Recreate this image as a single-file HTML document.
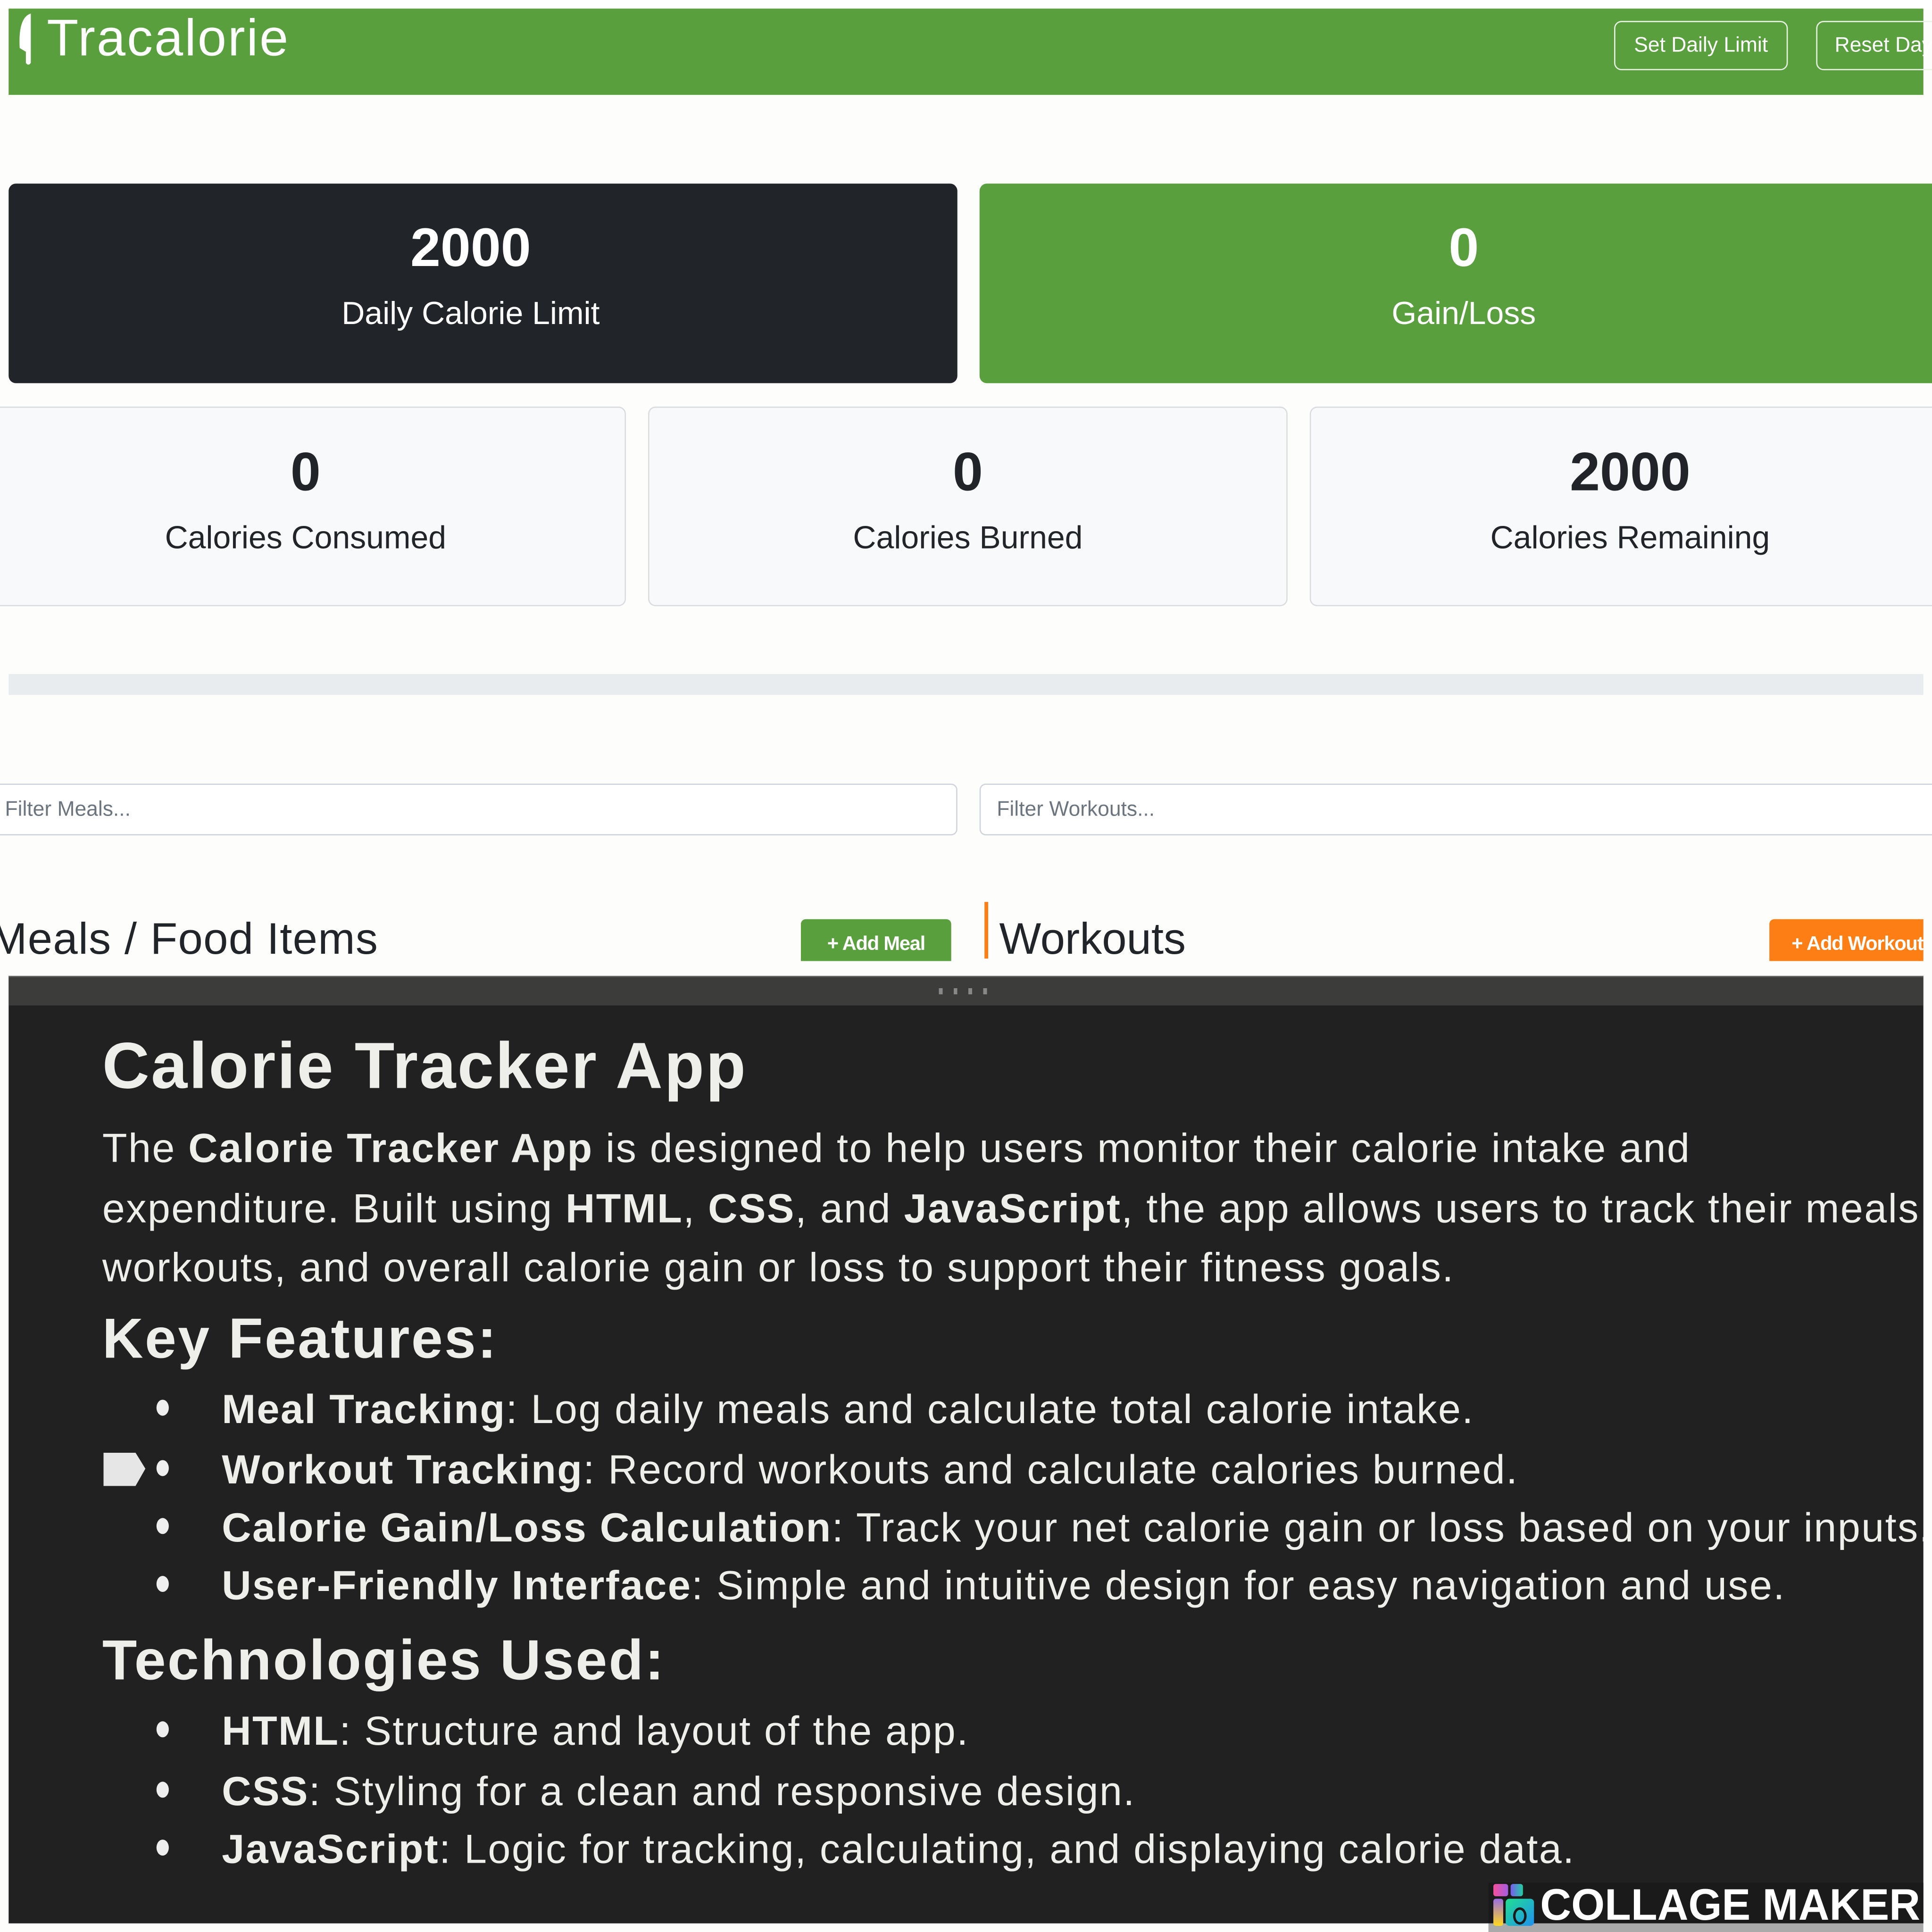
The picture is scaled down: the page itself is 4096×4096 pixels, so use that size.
<!DOCTYPE html>
<html><head><meta charset="utf-8"><style>
html,body{margin:0;padding:0;background:#fff;width:4096px;height:4096px;overflow:hidden}
#s{position:absolute;left:0;top:0;width:1568px;height:1568px;transform:scale(2.612245);transform-origin:0 0;font-family:"Liberation Sans",sans-serif;background:#fdfdfb}
.a{position:absolute}
.c{text-align:center}
.num{font-weight:bold;font-size:44px}
.lab{font-size:26px}
.card{position:absolute;border-radius:6px;box-sizing:border-box}
.lc{background:#f8f9fa;border:1px solid #d9dcdf;color:#212529}
.dk{color:#eeeeea;white-space:nowrap;letter-spacing:1.3px}
.p{font-size:33px;letter-spacing:0.95px}
.b{font-weight:bold}
.dot{position:absolute;width:10px;height:13px;border-radius:50%;background:#eee;left:120px}
</style></head><body><div id="s">
<div class="a" style="left:0;top:0;width:1568px;height:7px;background:#fff"></div>
<div class="a" style="left:7px;top:7px;width:1554px;height:70px;background:#5a9f3e"></div>
<svg class="a" style="left:10px;top:9px" width="20" height="46" viewBox="0 0 20 46"><path d="M15 2 C8 4 5 14 6 30 L11 33 L11 42 Q13 45 15 42 Z" fill="#fff"/></svg>
<div class="a" style="left:38px;top:7px;font-size:42px;color:#fff;letter-spacing:1.2px">Tracalorie</div>
<div class="a c" style="left:1310px;top:17px;width:141px;height:40px;border:1px solid #e9f2e4;border-radius:6px;box-sizing:border-box;color:#fff;font-size:17px;line-height:38px">Set Daily Limit</div>
<div class="a" style="left:1474px;top:17px;width:100px;height:40px;border:1px solid #e9f2e4;border-radius:6px;box-sizing:border-box;color:#fff;font-size:17px;line-height:38px;padding-left:14px;overflow:hidden;white-space:nowrap">Reset Day</div>

<div class="card c" style="left:7px;top:149px;width:770px;height:162px;background:#212529;color:#fff"><div style="width:750px"><div class="num" style="margin-top:28px">2000</div><div class="lab" style="margin-top:12px">Daily Calorie Limit</div></div></div>
<div class="card c" style="left:795px;top:149px;width:780px;height:162px;background:#5a9f3e;color:#fff"><div style="width:786px"><div class="num" style="margin-top:28px">0</div><div class="lab" style="margin-top:12px">Gain/Loss</div></div></div>

<div class="card lc c" style="left:-6px;top:330px;width:514px;height:162px"><div style="padding-right:6px"><div class="num" style="margin-top:28px">0</div><div class="lab" style="margin-top:12px">Calories Consumed</div></div></div>
<div class="card lc c" style="left:526px;top:330px;width:519px;height:162px"><div class="num" style="margin-top:28px">0</div><div class="lab" style="margin-top:12px">Calories Burned</div></div>
<div class="card lc c" style="left:1063px;top:330px;width:520px;height:162px"><div style="width:518px"><div class="num" style="margin-top:28px">2000</div><div class="lab" style="margin-top:12px">Calories Remaining</div></div></div>

<div class="a" style="left:7px;top:547px;width:1554px;height:17px;background:#e9ecef"></div>

<div class="a" style="left:-10px;top:636px;width:787px;height:42px;border:1px solid #ced4da;border-radius:5px;box-sizing:border-box;background:#fff;font-size:17px;color:#6c757d;line-height:40px;padding-left:13px">Filter Meals...</div>
<div class="a" style="left:795px;top:636px;width:790px;height:42px;border:1px solid #ced4da;border-radius:5px;box-sizing:border-box;background:#fff;font-size:17px;color:#6c757d;line-height:40px;padding-left:13px">Filter Workouts...</div>

<div class="a" style="left:-8px;top:741px;font-size:36px;color:#212529;white-space:nowrap;letter-spacing:0.5px">Meals / Food Items</div>
<div class="a c" style="left:650px;top:746px;width:122px;height:34px;background:#5a9f3e;border-radius:4px 4px 0 0;color:#fff;font-size:16px;font-weight:bold;line-height:42px;letter-spacing:-0.5px">+ Add Meal</div>
<div class="a" style="left:799px;top:732px;width:3px;height:46px;background:#fd7e14"></div>
<div class="a" style="left:811px;top:741px;font-size:36px;color:#212529">Workouts</div>
<div class="a" style="left:1436px;top:746px;width:125px;height:34px;background:#fd7e14;border-radius:4px 0 0 0;color:#fff;font-size:16px;font-weight:bold;line-height:42px;letter-spacing:-0.5px;white-space:nowrap;overflow:hidden;padding-left:18px;box-sizing:border-box">+ Add Workout</div>

<div class="a" style="left:0;top:780px;width:1568px;height:12px;background:#fdfdfb"></div>
<div class="a" style="left:7px;top:792px;width:1554px;height:769px;background:#212121;overflow:hidden">
<div class="a" style="left:0;top:0;width:1554px;height:23px;background:#3c3c3b;border-top:1px solid #666"></div>
<div class="a" style="left:755px;top:10px;width:40px;height:5px;background:repeating-linear-gradient(90deg,#888 0 3px,transparent 3px 12px)"></div>

<div class="a dk b" style="left:76px;top:43px;font-size:53px">Calorie Tracker App</div>
<div class="a dk p" style="left:76px;top:121px">The <b>Calorie Tracker App</b> is designed to help users monitor their calorie intake and</div>
<div class="a dk p" style="left:76px;top:170px">expenditure. Built using <b>HTML</b>, <b>CSS</b>, and <b>JavaScript</b>, the app allows users to track their meals,</div>
<div class="a dk p" style="left:76px;top:218px">workouts, and overall calorie gain or loss to support their fitness goals.</div>
<div class="a dk b" style="left:76px;top:267px;font-size:46px">Key Features:</div>

<div class="dot" style="top:344px"></div>
<div class="a dk p" style="left:173px;top:333px"><b>Meal Tracking</b>: Log daily meals and calculate total calorie intake.</div>
<svg class="a" style="left:77px;top:387px" width="36" height="28"><path d="M0 0 H26 L34 13 L26 27 H0Z" fill="#e6e6e6"/></svg>
<div class="dot" style="top:393px"></div>
<div class="a dk p" style="left:173px;top:382px"><b>Workout Tracking</b>: Record workouts and calculate calories burned.</div>
<div class="dot" style="top:440px"></div>
<div class="a dk p" style="left:173px;top:429px"><b>Calorie Gain/Loss Calculation</b>: Track your net calorie gain or loss based on your inputs.</div>
<div class="dot" style="top:487px"></div>
<div class="a dk p" style="left:173px;top:476px"><b>User-Friendly Interface</b>: Simple and intuitive design for easy navigation and use.</div>

<div class="a dk b" style="left:76px;top:528px;font-size:46px">Technologies Used:</div>
<div class="dot" style="top:605px"></div>
<div class="a dk p" style="left:173px;top:594px"><b>HTML</b>: Structure and layout of the app.</div>
<div class="dot" style="top:654px"></div>
<div class="a dk p" style="left:173px;top:643px"><b>CSS</b>: Styling for a clean and responsive design.</div>
<div class="dot" style="top:701px"></div>
<div class="a dk p" style="left:173px;top:690px"><b>JavaScript</b>: Logic for tracking, calculating, and displaying calorie data.</div>
</div>

<div class="a" style="left:1208px;top:1528px;width:353px;height:33px;background:#1a1a1a"></div>
<div class="a" style="left:1208px;top:1561px;width:353px;height:7px;background:#aaa"></div>
<div class="a" style="left:1212px;top:1529px;width:12px;height:10px;background:linear-gradient(90deg,#f4509a,#a45de0);border-radius:2px"></div>
<div class="a" style="left:1226px;top:1529px;width:10px;height:10px;background:linear-gradient(90deg,#7b5bf0,#20d0a0);border-radius:2px"></div>
<div class="a" style="left:1212px;top:1541px;width:8px;height:22px;background:linear-gradient(#9b6ee0,#ffd820);border-radius:2px"></div>
<div class="a" style="left:1222px;top:1541px;width:23px;height:22px;background:linear-gradient(135deg,#20e090,#2090f0);border-radius:3px"></div>
<div class="a" style="left:1228px;top:1548px;width:7px;height:10px;border:2px solid #1a1a1a;border-radius:50%"></div>
<div class="a" style="left:1250px;top:1525px;font-size:36px;font-weight:bold;color:#fff;white-space:nowrap;transform:scaleX(0.97);transform-origin:0 0">COLLAGE MAKER</div>
</div></body></html>
